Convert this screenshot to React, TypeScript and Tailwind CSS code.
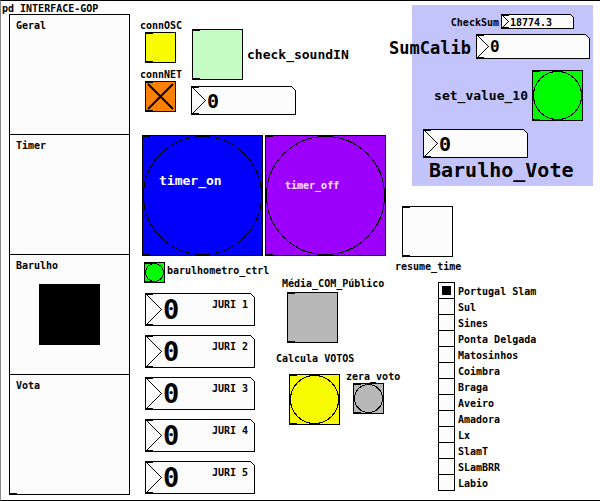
import { useId, useState } from "react";
import type { ReactNode } from "react";

const PORTS =
  "before:absolute before:top-0 before:left-0 before:h-px before:w-[7px] before:bg-black after:absolute after:bottom-0 after:left-0 after:h-px after:w-[7px] after:bg-black";

function Toggle({
  id,
  className,
  defaultChecked = false,
}: {
  id: string;
  className: string;
  defaultChecked?: boolean;
}) {
  const [on, setOn] = useState(defaultChecked);
  return (
    <span className={`relative block shrink-0 border border-black ${PORTS} ${className}`}>
      <input
        id={id}
        type="checkbox"
        checked={on}
        onChange={() => setOn(!on)}
        className="block size-full appearance-none"
      />
      {on && (
        <svg
          viewBox="0 0 29 29"
          className="pointer-events-none absolute inset-0 size-full"
          stroke="black"
          strokeWidth="2"
        >
          <path d="M2 2 27 27M2 27 27 2" />
        </svg>
      )}
    </span>
  );
}

function Bang({
  id,
  size,
  className,
  children,
}: {
  id?: string;
  size: number;
  className: string;
  children?: ReactNode;
}) {
  const inner = size - 2;
  return (
    <button
      id={id}
      type="button"
      className={`relative block shrink-0 border border-black ${PORTS} ${className}`}
    >
      <svg
        viewBox={`0 0 ${inner} ${inner}`}
        className="absolute inset-0 size-full"
        fill="none"
        stroke="black"
        shapeRendering="crispEdges"
      >
        <circle cx={inner / 2} cy={inner / 2} r={inner / 2 - 0.5} />
      </svg>
      {children}
    </button>
  );
}

function NumberBox({
  id,
  w,
  h,
  value,
  className,
  inputClass,
}: {
  id: string;
  w: number;
  h: number;
  value: string;
  className: string;
  inputClass: string;
}) {
  const r = w - 0.5;
  const b = h - 0.5;
  const cut = h > 20 ? 4 : 3;
  return (
    <span className={`relative block shrink-0 ${className}`}>
      <svg
        viewBox={`0 0 ${w} ${h}`}
        className="absolute inset-0 size-full"
        stroke="black"
        fill="none"
        shapeRendering="crispEdges"
      >
        <path d={`M.5 .5H${r - cut}L${r} ${0.5 + cut}V${b}H.5Z`} fill="#fcfcfc" />
        <path d={`M.5 .5 ${h / 2} ${h / 2} .5 ${b}`} />
        <path d={`M0 1.5H8M0 ${h - 1.5}H8`} />
      </svg>
      <input
        id={id}
        type="text"
        defaultValue={value}
        className={`absolute inset-0 size-full bg-transparent outline-none ${inputClass}`}
      />
    </span>
  );
}

const SECTIONS = ["Geral", "Timer", "Barulho", "Vota"];

const JURY = ["JURI 1", "JURI 2", "JURI 3", "JURI 4", "JURI 5"];

const TEAMS = [
  "Portugal Slam",
  "Sul",
  "Sines",
  "Ponta Delgada",
  "Matosinhos",
  "Coimbra",
  "Braga",
  "Aveiro",
  "Amadora",
  "Lx",
  "SlamT",
  "SLamBRR",
  "Labio",
];

function SectionPicker() {
  const name = useId();
  return (
    <div
      role="radiogroup"
      aria-label="pd INTERFACE-GOP"
      className={`relative ml-2 w-[121px] border border-t-0 border-black bg-[#fcfcfc] ${PORTS}`}
    >
      {SECTIONS.map((s) => (
        <label key={s} className="block h-[120px] border-t border-black px-[6px] pt-[5px]">
          <span className="block">{s}</span>
          <input
            type="radio"
            name={name}
            defaultChecked={s === "Barulho"}
            className="mx-auto mt-3 block size-[61px] appearance-none checked:bg-black"
          />
        </label>
      ))}
    </div>
  );
}

function TeamPicker() {
  const name = useId();
  return (
    <div role="radiogroup" aria-label="Slam" className="mt-[9px] ml-[52px]">
      {TEAMS.map((t, i) => (
        <label key={t} className="flex h-4 gap-[3px] leading-5">
          <input
            type="radio"
            name={name}
            defaultChecked={i === 0}
            className="relative size-[17px] shrink-0 appearance-none border border-black bg-[#fcfcfc] before:absolute before:inset-[3px] checked:before:bg-black"
          />
          {t}
        </label>
      ))}
    </div>
  );
}

export default function App() {
  return (
    <main className="flex min-h-screen items-start border-y border-l border-y-black border-l-[#888888] bg-white font-['DejaVu_Sans_Mono',monospace] text-[10px] leading-[12px] font-bold whitespace-nowrap text-black">
      <section className="shrink-0 pb-[5px]">
        <h1 className="h-[13px] pt-[2px] pl-px">pd INTERFACE-GOP</h1>
        <SectionPicker />
      </section>

      <section className="ml-[10px] w-[246px] shrink-0">
        <div className="flex items-start">
          <div className="w-[51px] pt-[19px]">
            <label htmlFor="osc" className="block">
              connOSC
            </label>
            <Toggle id="osc" className="mb-[6px] ml-[5px] size-[31px] bg-[#f8fc00]" />
            <label htmlFor="net" className="block">
              connNET
            </label>
            <Toggle id="net" defaultChecked className="ml-[5px] size-[31px] bg-[#fc8000]" />
          </div>
          <div className="pt-[28px]">
            <div className="flex items-center gap-1 pl-px">
              <Toggle id="sound" className="size-[51px] bg-[#c4fcc4]" />
              <label htmlFor="sound" className="text-[13px] leading-4">
                check_soundIN
              </label>
            </div>
            <NumberBox
              id="level"
              w={105}
              h={29}
              value="0"
              className="mt-[6px] h-[29px] w-[105px]"
              inputClass="pl-4 text-[20px]"
            />
          </div>
        </div>

        <div className="mt-[20px] ml-[2px] flex gap-[2px]">
          <Bang size={121} className="size-[121px] bg-[#0000fc]">
            <span className="absolute top-[37px] left-4 text-[13px] leading-4 text-white">
              timer_on
            </span>
          </Bang>
          <Bang size={121} className="size-[121px] bg-[#9c00fc]">
            <span className="absolute top-[44px] left-[19px] text-[#fce8fc]">timer_off</span>
          </Bang>
        </div>

        <div className="mt-[6px] ml-1 flex">
          <div className="w-[132px] shrink-0">
            <div className="flex gap-[2px]">
              <Bang id="ctrl" size={21} className="size-[21px] bg-[#00fc00]" />
              <label htmlFor="ctrl" className="leading-[18px]">
                barulhometro_ctrl
              </label>
            </div>
            <div className="mt-[10px] ml-px flex flex-col gap-[9px]">
              {JURY.map((j) => (
                <div key={j} className="relative w-[110px]">
                  <NumberBox
                    id={j}
                    w={110}
                    h={33}
                    value="0"
                    className="h-[33px] w-[110px]"
                    inputClass="pl-[18px] text-[27px]"
                  />
                  <label htmlFor={j} className="absolute top-[6px] right-[7px]">
                    {j}
                  </label>
                </div>
              ))}
            </div>
          </div>
          <div className="flex flex-col items-start pt-4">
            <label htmlFor="media" className="ml-[6px]">
              Média_COM_Público
            </label>
            <Toggle id="media" className="mt-[2px] ml-[11px] size-[51px] bg-[#b8b8b8]" />
            <label htmlFor="calc" className="mt-[10px]">
              Calcula VOTOS
            </label>
            <div className="mt-[6px] ml-[13px] flex gap-[6px]">
              <Bang id="calc" size={51} className="mt-[3px] size-[51px] bg-[#f8fc00]" />
              <div>
                <label htmlFor="zera" className="block">
                  zera_voto
                </label>
                <Bang id="zera" size={31} className="ml-[7px] size-[31px] bg-[#b8b8b8]" />
              </div>
            </div>
          </div>
        </div>
      </section>

      <section className="min-w-0 grow">
        <div className="mt-1 ml-[26px] h-[181px] w-[181px] bg-[#c4c4fc] pt-[9px]">
          <div className="flex items-center justify-end gap-[2px] pr-[19px]">
            <label htmlFor="check" className="pt-[2px]">
              CheckSum
            </label>
            <NumberBox
              id="check"
              w={73}
              h={15}
              value="18774.3"
              className="h-[15px] w-[73px]"
              inputClass="pt-px pl-[9px] text-[10px]"
            />
          </div>
          <div className="mt-[5px] flex items-center justify-end gap-[5px] pr-[3px]">
            <label htmlFor="calib" className="shrink-0 pt-[3px] text-[17px] leading-5">
              SumCalib
            </label>
            <NumberBox
              id="calib"
              w={114}
              h={25}
              value="0"
              className="h-[25px] w-[114px]"
              inputClass="pl-[14px] text-[16px]"
            />
          </div>
          <div className="mt-[11px] flex items-center justify-end gap-1 pr-[10px]">
            <label htmlFor="set10" className="text-[13px] leading-4">
              set_value_10
            </label>
            <Bang id="set10" size={51} className="size-[51px] bg-[#00fc00]" />
          </div>
          <NumberBox
            id="vote"
            w={105}
            h={29}
            value="0"
            className="mt-2 ml-[11px] h-[29px] w-[105px]"
            inputClass="pl-4 text-[20px]"
          />
          <label htmlFor="vote" className="block pl-[17px] text-[20px] leading-6">
            Barulho_Vote
          </label>
        </div>

        <div className="mt-[20px] ml-[9px]">
          <Toggle id="resume" className="ml-[7px] size-[51px] bg-[#fcfcfc]" />
          <label htmlFor="resume" className="block pt-1">
            resume_time
          </label>
        </div>
        <TeamPicker />
      </section>
    </main>
  );
}
